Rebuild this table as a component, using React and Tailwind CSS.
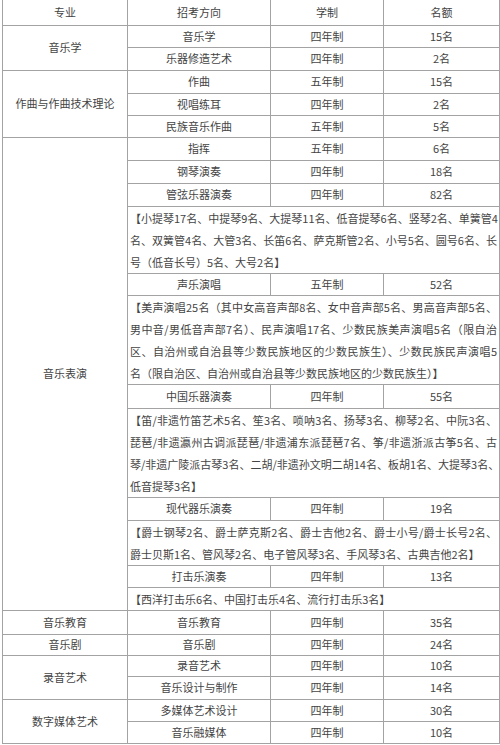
import React from "react";

const cell = "border border-[#a3a3a3] text-center align-middle p-0";
const note = "border border-[#a3a3a3] text-left align-middle pl-[2px] pr-[2px] py-0 leading-[22px]";

function Lines({ lines }) {
  return (
    <div>
      {lines.map((l, i) => (
        <div
          key={i}
          className={
            i < lines.length - 1
              ? "whitespace-nowrap text-justify [text-align-last:justify]"
              : "whitespace-nowrap text-left"
          }
        >
          {l}
        </div>
      ))}
    </div>
  );
}

export default function App() {
  return (
    <div className="w-[500px] h-[745px] bg-white overflow-hidden">
      <table
        className="border-collapse table-fixed w-[497px] ml-[2px] text-[11px] text-[#444]"
        style={{ fontFamily: '"Noto Sans CJK SC", "Noto Sans", sans-serif' }}
      >
        <colgroup>
          <col className="w-[125px]" />
          <col className="w-[143px]" />
          <col className="w-[113px]" />
          <col className="w-[116px]" />
        </colgroup>
        <tbody>
          <tr className="h-[25px]">
            <td className={cell + " border-t-0"}>专业</td>
            <td className={cell + " border-t-0"}>招考方向</td>
            <td className={cell + " border-t-0"}>学制</td>
            <td className={cell + " border-t-0"}>名额</td>
          </tr>
          <tr className="h-[22px]">
            <td className={cell} rowSpan={2}>音乐学</td>
            <td className={cell}>音乐学</td>
            <td className={cell}>四年制</td>
            <td className={cell}>15名</td>
          </tr>
          <tr className="h-[23px]">
            <td className={cell}>乐器修造艺术</td>
            <td className={cell}>四年制</td>
            <td className={cell}>2名</td>
          </tr>
          <tr className="h-[23px]">
            <td className={cell} rowSpan={3}>作曲与作曲技术理论</td>
            <td className={cell}>作曲</td>
            <td className={cell}>五年制</td>
            <td className={cell}>15名</td>
          </tr>
          <tr className="h-[22px]">
            <td className={cell}>视唱练耳</td>
            <td className={cell}>四年制</td>
            <td className={cell}>2名</td>
          </tr>
          <tr className="h-[22px]">
            <td className={cell}>民族音乐作曲</td>
            <td className={cell}>五年制</td>
            <td className={cell}>5名</td>
          </tr>
          <tr className="h-[23px]">
            <td className={cell} rowSpan={12}>音乐表演</td>
            <td className={cell}>指挥</td>
            <td className={cell}>五年制</td>
            <td className={cell}>6名</td>
          </tr>
          <tr className="h-[23px]">
            <td className={cell}>钢琴演奏</td>
            <td className={cell}>四年制</td>
            <td className={cell}>18名</td>
          </tr>
          <tr className="h-[23px]">
            <td className={cell}>管弦乐器演奏</td>
            <td className={cell}>四年制</td>
            <td className={cell}>82名</td>
          </tr>
          <tr className="h-[67px]">
            <td className={note} colSpan={3}>
              <Lines
                lines={[
                  "【小提琴17名、中提琴9名、大提琴11名、低音提琴6名、竖琴2名、单簧管4",
                  "名、双簧管4名、大管3名、长笛6名、萨克斯管2名、小号5名、圆号6名、长",
                  "号（低音长号）5名、大号2名】",
                ]}
              />
            </td>
          </tr>
          <tr className="h-[22px]">
            <td className={cell}>声乐演唱</td>
            <td className={cell}>五年制</td>
            <td className={cell}>52名</td>
          </tr>
          <tr className="h-[88px]">
            <td className={note} colSpan={3}>
              <Lines
                lines={[
                  "【美声演唱25名（其中女高音声部8名、女中音声部5名、男高音声部5名、",
                  "男中音/男低音声部7名）、民声演唱17名、少数民族美声演唱5名（限自治",
                  "区、自治州或自治县等少数民族地区的少数民族生）、少数民族民声演唱5",
                  "名（限自治区、自治州或自治县等少数民族地区的少数民族生）】",
                ]}
              />
            </td>
          </tr>
          <tr className="h-[24px]">
            <td className={cell}>中国乐器演奏</td>
            <td className={cell}>四年制</td>
            <td className={cell}>55名</td>
          </tr>
          <tr className="h-[88px]">
            <td className={note} colSpan={3}>
              <Lines
                lines={[
                  "【笛/非遗竹笛艺术5名、笙3名、唢呐3名、扬琴3名、柳琴2名、中阮3名、",
                  "琵琶/非遗瀛州古调派琵琶/非遗浦东派琵琶7名、筝/非遗浙派古筝5名、古",
                  "琴/非遗广陵派古琴3名、二胡/非遗孙文明二胡14名、板胡1名、大提琴3名、",
                  "低音提琴3名】",
                ]}
              />
            </td>
          </tr>
          <tr className="h-[23px]">
            <td className={cell}>现代器乐演奏</td>
            <td className={cell}>四年制</td>
            <td className={cell}>19名</td>
          </tr>
          <tr className="h-[45px]">
            <td className={note} colSpan={3}>
              <Lines
                lines={[
                  "【爵士钢琴2名、爵士萨克斯2名、爵士吉他2名、爵士小号/爵士长号2名、",
                  "爵士贝斯1名、管风琴2名、电子管风琴3名、手风琴3名、古典吉他2名】",
                ]}
              />
            </td>
          </tr>
          <tr className="h-[22px]">
            <td className={cell}>打击乐演奏</td>
            <td className={cell}>四年制</td>
            <td className={cell}>13名</td>
          </tr>
          <tr className="h-[23px]">
            <td className={note} colSpan={3}>
              <Lines lines={["【西洋打击乐6名、中国打击乐4名、流行打击乐3名】"]} />
            </td>
          </tr>
          <tr className="h-[24px]">
            <td className={cell}>音乐教育</td>
            <td className={cell}>音乐教育</td>
            <td className={cell}>四年制</td>
            <td className={cell}>35名</td>
          </tr>
          <tr className="h-[21px]">
            <td className={cell}>音乐剧</td>
            <td className={cell}>音乐剧</td>
            <td className={cell}>四年制</td>
            <td className={cell}>24名</td>
          </tr>
          <tr className="h-[21px]">
            <td className={cell} rowSpan={2}>录音艺术</td>
            <td className={cell}>录音艺术</td>
            <td className={cell}>四年制</td>
            <td className={cell}>10名</td>
          </tr>
          <tr className="h-[23px]">
            <td className={cell}>音乐设计与制作</td>
            <td className={cell}>四年制</td>
            <td className={cell}>14名</td>
          </tr>
          <tr className="h-[22px]">
            <td className={cell} rowSpan={2}>数字媒体艺术</td>
            <td className={cell}>多媒体艺术设计</td>
            <td className={cell}>四年制</td>
            <td className={cell}>30名</td>
          </tr>
          <tr className="h-[22px]">
            <td className={cell}>音乐融媒体</td>
            <td className={cell}>四年制</td>
            <td className={cell}>10名</td>
          </tr>
        </tbody>
      </table>
    </div>
  );
}
